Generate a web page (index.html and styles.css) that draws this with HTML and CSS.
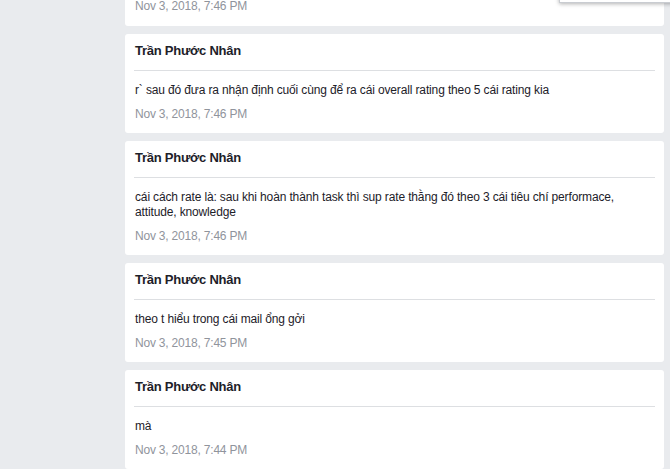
FILE: index.html
```html
<!DOCTYPE html>
<html lang="vi">
<head>
<meta charset="utf-8">
<title>Messages</title>
<link rel="stylesheet" href="styles.css">
</head>
<body>
<div class="page">
  <div class="feed">
    <div class="card card-tail">
      <div class="date">Nov 3, 2018, 7:46 PM</div>
    </div>
    <div class="card">
      <div class="card-head"><span class="name">Trần Phước Nhân</span></div>
      <div class="msg">r` sau đó đưa ra nhận định cuối cùng để ra cái overall rating theo 5 cái rating kia</div>
      <div class="date">Nov 3, 2018, 7:46 PM</div>
    </div>
    <div class="card">
      <div class="card-head"><span class="name">Trần Phước Nhân</span></div>
      <div class="msg">cái cách rate là: sau khi hoàn thành task thì sup rate thằng đó theo 3 cái tiêu chí performace, attitude, knowledge</div>
      <div class="date">Nov 3, 2018, 7:46 PM</div>
    </div>
    <div class="card">
      <div class="card-head"><span class="name">Trần Phước Nhân</span></div>
      <div class="msg">theo t hiểu trong cái mail ổng gởi</div>
      <div class="date">Nov 3, 2018, 7:45 PM</div>
    </div>
    <div class="card">
      <div class="card-head"><span class="name">Trần Phước Nhân</span></div>
      <div class="msg">mà</div>
      <div class="date">Nov 3, 2018, 7:44 PM</div>
    </div>
  </div>
  <div class="popup"></div>
</div>
</body>
</html>
```

FILE: styles.css
```css
html, body {
  margin: 0;
  padding: 0;
  background: #e9ebee;
  overflow: hidden;
}
.page {
  position: relative;
  width: 670px;
  height: 469px;
  overflow: hidden;
  font-family: "Liberation Sans", Arial, sans-serif;
  color: #1d2129;
}
.feed {
  margin: 0 6px 0 125px;
  display: flex;
  flex-direction: column;
  gap: 8px;
}
.card {
  background: #fff;
  border-radius: 3px;
  padding: 0 9px 11px;
}
.card-tail {
  border-radius: 0 0 3px 3px;
  padding-bottom: 14px;
}
.card-tail .date {
  margin-top: 0;
  line-height: 12px;
}
.card-head {
  padding: 8px 1px 11px;
  border-bottom: 1px solid #dddfe2;
  line-height: 16px;
}
.name {
  font-size: 13px;
  font-weight: bold;
  letter-spacing: -0.25px;
  color: #1d2129;
}
.msg {
  margin-top: 12px;
  padding-left: 1px;
  font-size: 12px;
  line-height: 15px;
  letter-spacing: -0.14px;
  color: #1d2129;
}
.date {
  margin-top: 8px;
  padding-left: 1px;
  font-size: 12px;
  line-height: 16px;
  letter-spacing: -0.2px;
  color: #90949c;
}
.popup {
  position: absolute;
  top: -20px;
  left: 559px;
  width: 120px;
  height: 21px;
  background: #fff;
  border: 1px solid #c9ccd1;
  box-shadow: 0 1px 4px rgba(0, 0, 0, 0.3);
}
```
